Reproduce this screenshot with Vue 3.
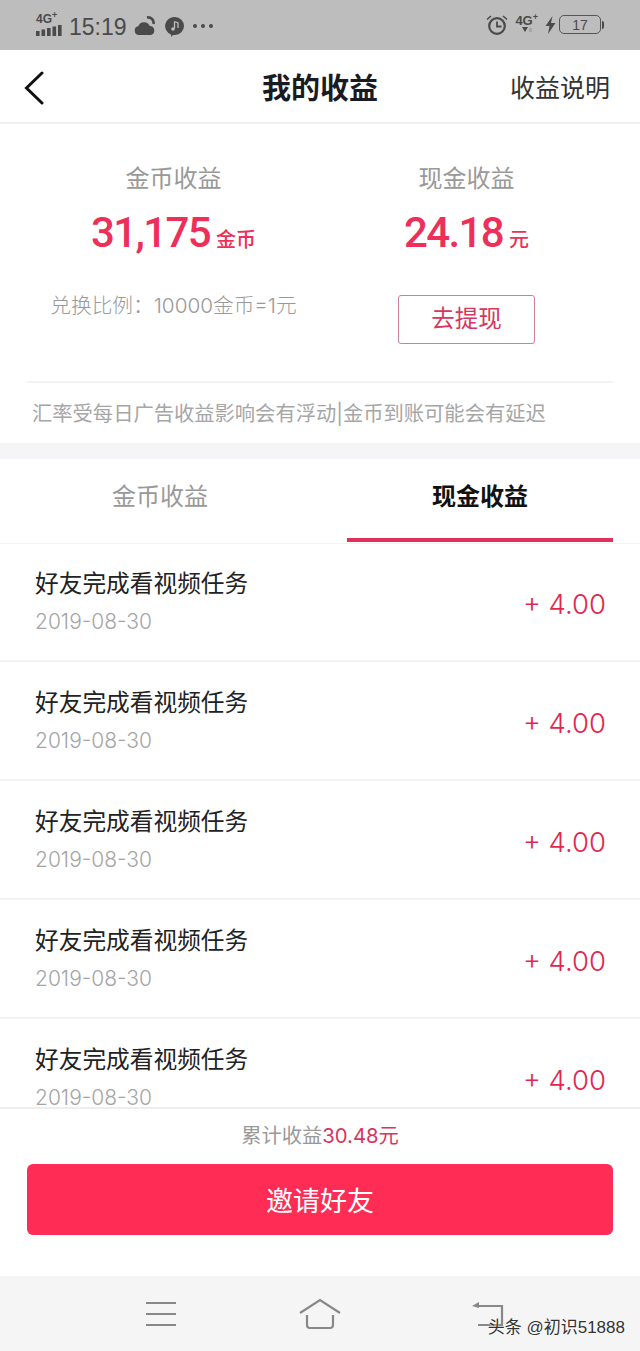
<script setup>
const rows = [1, 2, 3, 4, 5];
</script>

<template>
  <div class="page">
    <div class="status">
      <div class="status-left">
        <div class="net">
          <span class="net-label">4G<sup>+</sup></span>
          <svg width="26" height="11" viewBox="0 0 26 11">
            <rect x="0" y="6" width="3.6" height="5" fill="#4a4a4a" />
            <rect x="5.5" y="4.5" width="3.6" height="6.5" fill="#4a4a4a" />
            <rect x="11" y="3" width="3.6" height="8" fill="#4a4a4a" />
            <rect x="16.5" y="1.5" width="3.6" height="9.5" fill="#4a4a4a" />
            <rect x="22" y="0" width="3.6" height="11" fill="#4a4a4a" />
          </svg>
        </div>
        <span class="time">15:19</span>
        <svg class="weather" width="22" height="20" viewBox="0 0 22 20">
          <path d="M13 1.5a5.5 5.5 0 0 1 6.5 6.5" fill="none" stroke="#4a4a4a" stroke-width="2.6" />
          <path d="M5 19a4.4 4.4 0 0 1-.8-8.7A6.2 6.2 0 0 1 15.8 10a4.6 4.6 0 0 1 1.2 9z" fill="#4a4a4a" />
        </svg>
        <svg class="music" width="20" height="21" viewBox="0 0 20 21">
          <path d="M10 1a9 9 0 0 1 0 18H8l-2 2v-2.6A9 9 0 0 1 10 1z" fill="#4a4a4a" />
          <path d="M9.5 5.5v7M9.5 5.5l3.5 1.5v5" fill="none" stroke="#bdbdbd" stroke-width="1.3" />
          <circle cx="8" cy="13" r="1.8" fill="#bdbdbd" />
        </svg>
        <div class="dots"><i></i><i></i><i></i></div>
      </div>
      <div class="status-right">
        <svg width="22" height="22" viewBox="0 0 22 22">
          <circle cx="11" cy="12" r="7.8" fill="none" stroke="#4a4a4a" stroke-width="2.2" />
          <path d="M11 7.5V12.5H15.5" fill="none" stroke="#4a4a4a" stroke-width="1.8" />
          <path d="M1 5.5L5 2M21 5.5L17 2" stroke="#4a4a4a" stroke-width="1.6" />
        </svg>
        <div class="net-small">
          <span class="net-label">4G<sup>+</sup></span>
          <svg width="14" height="6" viewBox="0 0 14 6">
            <path d="M2 0h6L5 5z" fill="#4a4a4a" />
            <path d="M9 1h3v4H9z" fill="#a6a6a6" />
          </svg>
        </div>
        <svg class="bolt" width="11" height="18" viewBox="0 0 11 18">
          <path d="M7.5 0L0.5 10H4.5L3 18L10.5 7H6z" fill="#4a4a4a" />
        </svg>
        <div class="battery"><span>17</span></div>
        <div class="battery-tip"></div>
      </div>
    </div>

    <div class="nav">
      <svg class="back" width="22" height="34" viewBox="0 0 22 34">
        <path d="M19 2L3.5 17L19 32" fill="none" stroke="#111" stroke-width="3" stroke-linecap="round" />
      </svg>
      <div class="nav-title">我的收益</div>
      <div class="nav-link">收益说明</div>
    </div>

    <div class="summary">
      <div class="summary-cols">
        <div class="col">
          <div class="col-label">金币收益</div>
          <div class="col-value">31,175<small>金币</small></div>
          <div class="rate">兑换比例：10000金币=1元</div>
        </div>
        <div class="col">
          <div class="col-label">现金收益</div>
          <div class="col-value">24.18<small>元</small></div>
          <button class="withdraw">去提现</button>
        </div>
      </div>
      <div class="notice">汇率受每日广告收益影响会有浮动|金币到账可能会有延迟</div>
    </div>

    <div class="tabs">
      <div class="tab"><span>金币收益</span></div>
      <div class="tab active"><span>现金收益</span></div>
    </div>

    <div class="list">
      <div class="row" v-for="row in rows" :key="row">
        <div>
          <div class="row-title">好友完成看视频任务</div>
          <div class="row-date">2019-08-30</div>
        </div>
        <div class="row-amount">+ 4.00</div>
      </div>
    </div>

    <div class="footer">
      <div class="total">累计收益<span>30.48元</span></div>
      <button class="invite">邀请好友</button>
    </div>

    <div class="sysbar">
      <svg class="sys-menu" width="32" height="26" viewBox="0 0 32 26">
        <path d="M1 2H31M1 13H31M1 24H31" stroke="#888" stroke-width="2" />
      </svg>
      <svg class="sys-home" width="44" height="32" viewBox="0 0 44 32">
        <path d="M2 15L22 2L42 15M9 17V27Q9 30 12 30H32Q35 30 35 27V17" fill="none" stroke="#888" stroke-width="2.2" />
      </svg>
      <svg class="sys-back" width="32" height="28" viewBox="0 0 32 28">
        <path d="M4 6H30V25H6" fill="none" stroke="#888" stroke-width="2.2" />
        <path d="M0 6L7 2V8z" fill="#888" />
      </svg>
      <div class="watermark">头条 @初识51888</div>
    </div>
  </div>
</template>

<style>
html,
body {
  margin: 0;
  background: #fff;
}
</style>

<style scoped>
.page {
  position: relative;
  width: 640px;
  height: 1351px;
  display: flex;
  flex-direction: column;
  overflow: hidden;
  font-family: "Inter", "Noto Sans CJK SC", sans-serif;
  background: #fff;
}
.status {
  height: 50px;
  flex: none;
  background: #bdbdbd;
  color: #4a4a4a;
  display: flex;
  justify-content: space-between;
  align-items: center;
  padding: 2px 36px 0;
  box-sizing: border-box;
  font-family: "Liberation Sans", sans-serif;
}
.status-left,
.status-right {
  display: flex;
  align-items: center;
}
.net {
  display: flex;
  flex-direction: column;
  width: 26px;
  margin-top: -4px;
}
.net-label {
  font-size: 12px;
  font-weight: 700;
  line-height: 12px;
}
.net-label sup {
  font-size: 9px;
  line-height: 0;
}
.time {
  font-size: 23px;
  margin-left: 7px;
  margin-top: 2px;
}
.weather {
  margin-left: 7px;
}
.music {
  margin-left: 9px;
}
.dots {
  display: flex;
  gap: 4px;
  margin-left: 8px;
}
.dots i {
  width: 4px;
  height: 4px;
  border-radius: 50%;
  background: #4a4a4a;
}
.status-right {
  margin-top: -3px;
}
.net-small {
  display: flex;
  flex-direction: column;
  align-items: center;
  margin-left: 7px;
  margin-top: -2px;
}
.net-small .net-label {
  font-size: 13px;
}
.bolt {
  margin-left: 7px;
}
.battery {
  width: 40px;
  height: 17px;
  margin-left: 3px;
  border: 1.5px solid #555;
  border-radius: 5px;
  display: flex;
  justify-content: center;
  align-items: center;
  font-size: 14px;
}
.battery-tip {
  width: 2px;
  height: 8px;
  margin-left: 1px;
  background: #4a4a4a;
  border-radius: 0 2px 2px 0;
}
.nav {
  position: relative;
  height: 74px;
  flex: none;
  display: flex;
  align-items: center;
  justify-content: center;
  border-bottom: 2px solid #f0f0f0;
  box-sizing: border-box;
}
.back {
  position: absolute;
  left: 23px;
  top: 21px;
}
.nav-title {
  font-size: 29px;
  font-weight: 700;
  color: #1a1a22;
}
.nav-link {
  position: absolute;
  right: 30px;
  top: 18px;
  font-size: 25px;
  color: #333;
}
.summary {
  height: 319px;
  flex: none;
  padding: 0 27px;
  display: flex;
  flex-direction: column;
  box-sizing: border-box;
}
.summary-cols {
  height: 259px;
  flex: none;
  display: grid;
  grid-template-columns: 293px 293px;
  border-bottom: 2px solid #f3f3f3;
  box-sizing: border-box;
}
.col {
  display: flex;
  flex-direction: column;
  align-items: center;
  padding-top: 40px;
}
.col-label {
  font-size: 24px;
  line-height: 30px;
  color: #999;
}
.col-value {
  margin-top: 14px;
  font-family: "Roboto", "Noto Sans CJK SC", sans-serif;
  font-size: 42px;
  line-height: 50px;
  font-weight: 500;
  letter-spacing: -1.6px;
  color: #ee2f5a;
}
.col-value small {
  font-size: 20px;
  letter-spacing: 0;
  margin-left: 6px;
}
.rate {
  margin-top: 28px;
  font-size: 20.7px;
  line-height: 26px;
  font-weight: 300;
  color: #999;
}
.withdraw {
  width: 137px;
  height: 49px;
  margin-top: 30px;
  padding: 0 0 5px;
  background: #fff;
  border: 1px solid #cf7f92;
  border-radius: 3px;
  font: inherit;
  font-size: 23.5px;
  color: #d6365f;
}
.notice {
  margin-top: 18px;
  padding-left: 5px;
  font-size: 20.3px;
  line-height: 26px;
  color: #a6a6a6;
}
.tabs {
  height: 101px;
  flex: none;
  display: flex;
  border-top: 16px solid #f5f5f7;
  border-bottom: 1px solid #f3f3f3;
  box-sizing: border-box;
}
.tab {
  flex: 1;
  display: flex;
  padding: 0 27px;
  font-size: 24px;
  color: #999;
}
.tab span {
  flex: 1;
  display: flex;
  align-items: center;
  justify-content: center;
  margin-bottom: 1px;
  border-bottom: 4px solid transparent;
  padding-bottom: 8px;
}
.tab.active span {
  font-weight: 700;
  color: #111;
  border-bottom-color: #e0315c;
}
.list {
  flex: 1;
  min-height: 0;
  overflow: hidden;
  margin-top: -1px;
}
.row {
  height: 119px;
  padding: 24px 34px 0 35px;
  display: flex;
  justify-content: space-between;
  border-bottom: 2px solid #f3f3f3;
  box-sizing: border-box;
}
.row-title {
  font-size: 23.7px;
  line-height: 34px;
  color: #222;
}
.row-date {
  margin-top: 6px;
  font-size: 21px;
  line-height: 30px;
  font-weight: 300;
  color: #a5a5a5;
}
.row-amount {
  margin-top: 19px;
  font-size: 27.5px;
  line-height: 36px;
  font-weight: 300;
  color: #e0284f;
}
.footer {
  height: 169px;
  flex: none;
  padding: 0 27px;
  border-top: 2px solid #eee;
  box-sizing: border-box;
  display: flex;
  flex-direction: column;
  align-items: center;
}
.total {
  margin-top: 14px;
  font-size: 20.3px;
  line-height: 26px;
  color: #999;
}
.total span {
  color: #d6365f;
}
.invite {
  width: 100%;
  height: 71px;
  margin-top: 15px;
  border: 0;
  border-radius: 6px;
  background: #ff2d55;
  font: inherit;
  font-size: 27px;
  color: #fff;
}
.sysbar {
  position: relative;
  height: 75px;
  flex: none;
  background: #f5f5f5;
  display: flex;
  align-items: center;
  padding-left: 145px;
}
.sys-home {
  margin-left: 121px;
}
.sys-back {
  margin-left: 130px;
}
.watermark {
  position: absolute;
  right: 15px;
  top: 37px;
  font-family: "Liberation Sans", "Noto Sans CJK SC", sans-serif;
  font-size: 17px;
  color: #333;
  text-shadow: 0 0 2px #fff;
}
</style>
